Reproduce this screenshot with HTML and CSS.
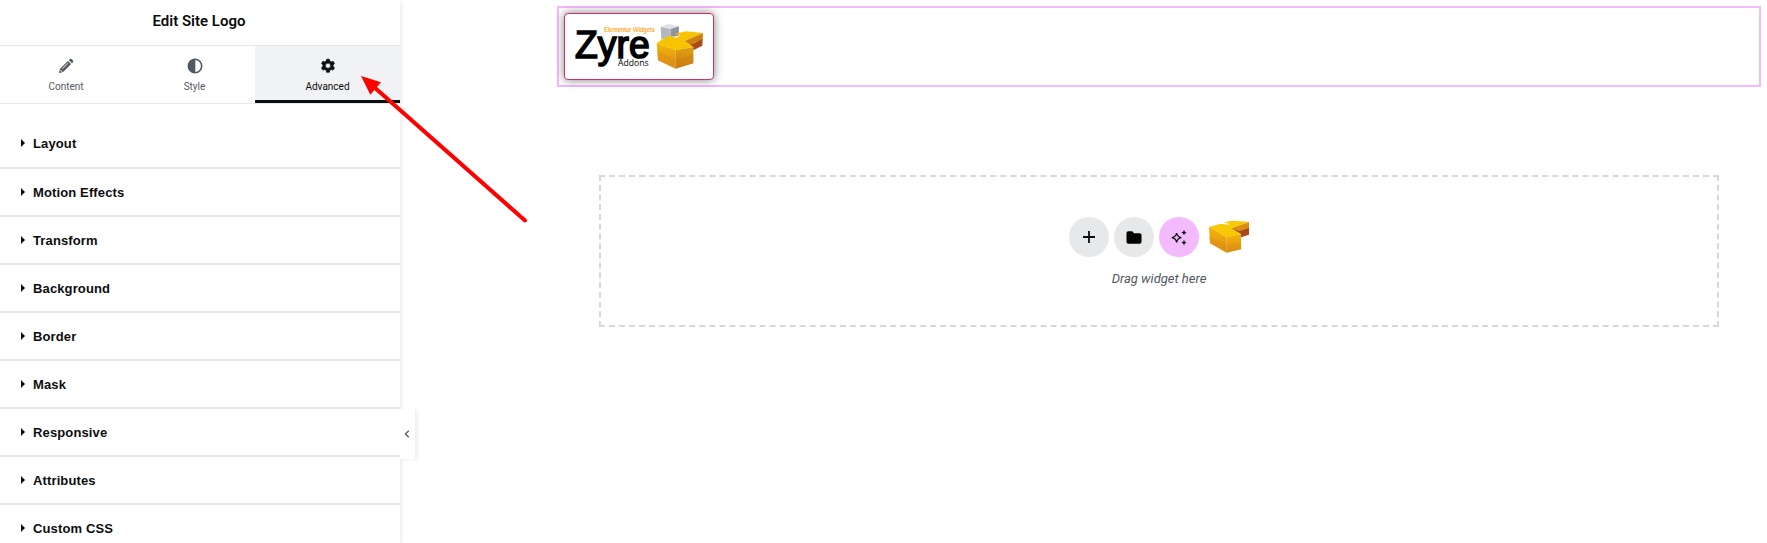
FILE: index.html
```html
<!DOCTYPE html>
<html lang="en">
<head>
<meta charset="utf-8">
<title>Edit Site Logo</title>
<meta name="viewport" content="width=device-width, initial-scale=1">
<link rel="stylesheet" href="styles.css">
</head>
<body>
<div class="editor">
  <!-- Left panel -->
  <div class="panel">
    <div class="panel-header">Edit Site Logo</div>
    <div class="tabs">
      <div class="tab tab-content">
        <svg width="16" height="16" viewBox="0 0 16 16">
          <path fill="#515962" d="M10 2.900 13.100 6 5.100 14 1.300 14.900Q.9 15 1 14.600L1.900 10.900ZM10.800 2.100 12.100.9Q12.900.4 13.600 1L15 2.400Q15.600 3.200 15.100 3.900L13.900 5.200Z"/>
          <path stroke="#fff" stroke-width=".9" fill="none" d="M4.500 10.700 10 5.200M2.300 11.800 3 12.900 4.300 13.700"/>
        </svg>
        <span>Content</span>
      </div>
      <div class="tab tab-style">
        <svg width="16" height="16" viewBox="0 0 16 16">
          <circle cx="8" cy="8" r="6.700" fill="none" stroke="#515962" stroke-width="1.600"/>
          <path fill="#515962" d="M8.300 1A7 7 0 0 0 8.300 15Z"/>
        </svg>
        <span>Style</span>
      </div>
      <div class="tab tab-advanced active">
        <svg width="16" height="16" viewBox="0 0 16 16">
          <path fill="#0c0d0e" stroke="#0c0d0e" stroke-width=".7" stroke-linejoin="round" fill-rule="evenodd" d="M6.600 1.200H9.400L9.800 3.100 11.200 3.900 13.100 3.300 14.500 5.600 13.100 6.900V8.500L14.500 9.800 13.100 12.100 11.200 11.500 9.800 12.300 9.400 14.300H6.600L6.200 12.300 4.800 11.500 2.900 12.100 1.500 9.800 2.900 8.500V6.900L1.500 5.600 2.900 3.300 4.800 3.900 6.200 3.100ZM8 5.100A2.600 2.600 0 1 0 8 10.300 2.600 2.600 0 1 0 8 5.100Z"/>
        </svg>
        <span>Advanced</span>
      </div>
    </div>
    <!-- Collapsed sections -->
    <div class="sections">
      <div class="section first">Layout</div>
      <div class="section">Motion Effects</div>
      <div class="section">Transform</div>
      <div class="section">Background</div>
      <div class="section">Border</div>
      <div class="section">Mask</div>
      <div class="section">Responsive</div>
      <div class="section">Attributes</div>
      <div class="section">Custom CSS</div>
    </div>
    <!-- Handle that hides the panel -->
    <div class="collapse">
      <svg width="6" height="8" viewBox="0 0 6 8"><path d="M4.700.8 1.500 4 4.700 7.200" fill="none" stroke="#515962" stroke-width="1.300"/></svg>
    </div>
  </div>

  <!-- Page preview -->
  <div class="preview">
    <div class="container">
      <div class="site-logo">
        <svg width="148" height="65" viewBox="75 42 444 195">
          <defs>
            <linearGradient id="front" x1="0" y1="0" x2="0" y2="1">
              <stop offset="0" stop-color="#f4b408"/>
              <stop offset="1" stop-color="#dc8f18"/>
            </linearGradient>
            <linearGradient id="side" x1="0" y1="0" x2="0" y2="1">
              <stop offset="0" stop-color="#e0a010"/>
              <stop offset="1" stop-color="#cc8016"/>
            </linearGradient>
          </defs>
          <text class="logo-name" x="105" y="173" textLength="224" lengthAdjust="spacingAndGlyphs">Zyre</text>
          <text class="logo-small" x="192" y="97" textLength="152" lengthAdjust="spacingAndGlyphs">Elementor Widgets</text>
          <text class="logo-addons" x="234" y="199" textLength="92" lengthAdjust="spacingAndGlyphs">Addons</text>
          <path fill="#b4b8be" d="M362 80 392 87V118H364Z"/>
          <path fill="#dfe1e5" d="M362 80 385 72 417 79 392 87Z"/>
          <path fill="#8f949b" d="M392 87 417 79 416 108 392 110Z"/>
          <path fill="#f6c400" d="M350 129 386 107 410 113 421 106 403 102 438 94 489 99 434 123 460 141 407 151Z"/>
          <path fill="url(#front)" d="M350 129 407 151V206L354 181Z"/>
          <path fill="#d98a18" opacity=".35" d="M352 153 407 176V206L354 181Z"/>
          <path fill="url(#side)" d="M407 151 460 141V190L407 206Z"/>
          <path fill="#c97c16" opacity=".4" d="M407 176 460 164V190L407 206Z"/>
          <path fill="#d08010" d="M434 123 489 99 488 120 460 130V141Z"/>
          <path fill="#ad4a1c" d="M452 134 488 117 487 137 460 151V141Z"/>
        </svg>
      </div>
    </div>

    <div class="dropzone">
      <div class="actions">
        <div class="action">
          <svg width="16" height="16" viewBox="0 0 16 16"><path d="M8 2V14M2 8H14" stroke="#0c0d0e" stroke-width="1.800" fill="none"/></svg>
        </div>
        <div class="action">
          <svg width="16" height="16" viewBox="0 0 16 16"><path fill="#000" d="M2.200 2.200H6.300L8 4.200H13.800Q15.500 4.200 15.500 5.900V12.800Q15.500 14.700 13.800 14.700H2.200Q.5 14.700.5 12.800V4Q.5 2.200 2.200 2.200Z"/></svg>
        </div>
        <div class="action ai">
          <svg width="18" height="18" viewBox="0 0 18 18">
            <path fill="none" stroke="#0c0d0e" stroke-width="1.300" d="M6.600 5Q7.300 9 11.300 9.600 7.300 10.300 6.600 14.300 5.900 10.300 1.900 9.600 5.900 9 6.600 5Z"/>
            <path fill="#0c0d0e" d="M14 2 14.900 3.700 16.600 4.600 14.900 5.500 14 7.200 13.100 5.500 11.400 4.600 13.100 3.700ZM14 12 14.900 13.700 16.600 14.600 14.900 15.500 14 17.200 13.100 15.500 11.400 14.600 13.100 13.700Z"/>
          </svg>
        </div>
        <div class="brick">
          <svg width="40" height="40" viewBox="477 51 120 120">
            <path fill="#f8c800" d="M477 81 513 71 532 74 540 72 522 67 545 62 597 65 544 85 573 102 530 112Z"/>
            <path fill="url(#front)" d="M477 81 530 112V158L480 130Z"/>
            <path fill="#d98412" opacity=".3" d="M478 110 530 136V158L480 130Z"/>
            <path fill="url(#front)" d="M530 112 573 102V148L530 158Z"/>
            <path fill="#d98412" opacity=".3" d="M530 136 573 127V148L530 158Z"/>
            <path fill="#dc8c0e" d="M544 85 597 66V88L573 98Z"/>
            <path fill="#a8481c" d="M544 85 568 94 597 84V104L573 112V102Z"/>
          </svg>
        </div>
      </div>
      <div class="drop-text">Drag widget here</div>
    </div>
  </div>
</div>

<!-- Arrow pointing at the Advanced tab -->
<svg class="arrow" width="180" height="160" viewBox="355 70 180 160">
  <path d="M374 87 525 220.500" stroke="#f00" stroke-width="4" stroke-linecap="round"/>
  <path fill="#f00" d="M361 76 381 82.300 370.300 94.700Z"/>
</svg>
</body>
</html>
```
FILE: styles.css
```css
* {
  box-sizing: border-box;
}
body {
  margin: 0;
  background-color: #fff;
  color: #0c0d0e;
  font-family: Roboto, "Liberation Sans", sans-serif;
  overflow: hidden;
}
svg {
  display: block;
}
.editor {
  display: flex;
  height: 543px;
}

/* Left panel */
.panel {
  position: relative;
  width: 400px;
  flex-shrink: 0;
  background-color: #fff;
  box-shadow: 1px 1px 5px rgba(0, 0, 0, 0.1);
}
.panel-header {
  height: 46px;
  padding-top: 1px;
  border-bottom: 1px solid #e6e8ea;
  line-height: 40px;
  font-size: 15px;
  font-weight: 600;
  text-align: center;
  padding-right: 2px;
}
.tabs {
  display: flex;
  height: 58px;
  border-bottom: 1px solid #e6e8ea;
}
.tab {
  display: flex;
  flex-direction: column;
  align-items: center;
  gap: 6px;
  padding-top: 12px;
  font-size: 10px;
  line-height: 14px;
  color: #515962;
}
.tab-content {
  width: 132px;
}
.tab-style {
  width: 123px;
  padding-left: 2px;
}
.tab-advanced {
  width: 145px;
}
.tab.active {
  background-color: #f1f2f3;
  color: #0c0d0e;
  border-bottom: 3px solid #0c0d0e;
}

/* Section list */
.sections {
  height: 439px;
  padding-top: 17px;
  overflow: hidden;
}
.section {
  display: flex;
  align-items: center;
  gap: 8px;
  height: 48px;
  padding-left: 21px;
  border-bottom: 2px solid #e6e6e6;
  font-family: "Liberation Sans", sans-serif;
  font-size: 13px;
  font-weight: bold;
  letter-spacing: 0.13px;
}
.section.first {
  padding-bottom: 2px;
}
.section:before {
  content: "";
  margin-top: -1px;
  border-left: 4px solid #0c0d0e;
  border-top: 4px solid transparent;
  border-bottom: 4px solid transparent;
}
.collapse {
  position: absolute;
  left: 400px;
  top: 409px;
  width: 15px;
  height: 50px;
  padding: 21px 0 0 4px;
  background-color: #fff;
  box-shadow: 3px 1px 3px rgba(0, 0, 0, 0.06);
}

/* Preview */
.preview {
  flex: 1;
  padding: 6px 6px 0 157px;
}
.container {
  height: 81px;
  padding: 5px;
  border: 2px solid #f3bafd;
}
.site-logo {
  width: 150px;
  height: 67px;
  border: 1px solid #cc3366;
  border-radius: 4px;
  background-color: #fff;
  box-shadow: 0 0 10px rgba(0, 0, 0, 0.5);
}
.logo-name {
  font-family: "Liberation Sans", sans-serif;
  font-size: 115px;
  stroke: #000;
  stroke-width: 5px;
}
.logo-small {
  font-family: "Liberation Sans", sans-serif;
  font-size: 19px;
  fill: #ffa91a;
  stroke: #ffa91a;
  stroke-width: 0.5px;
}
.logo-addons {
  font-family: "Open Sans", sans-serif;
  font-size: 25px;
}
.dropzone {
  width: 1120px;
  height: 152px;
  margin: 88px 0 0 42px;
  padding-top: 40px;
  border: 2px dashed #d5d8dc;
}
.actions {
  display: flex;
  justify-content: center;
  gap: 5px;
}
.action {
  display: flex;
  align-items: center;
  justify-content: center;
  width: 40px;
  height: 40px;
  border-radius: 50%;
  background-color: #e6e8ea;
}
.action.ai {
  background-color: #f3bafd;
}
.brick {
  margin-left: 5px;
}
.drop-text {
  margin-top: 14px;
  line-height: 16px;
  font-size: 13px;
  font-style: italic;
  text-align: center;
  color: #515962;
}

.arrow {
  position: absolute;
  left: 355px;
  top: 70px;
}
```
